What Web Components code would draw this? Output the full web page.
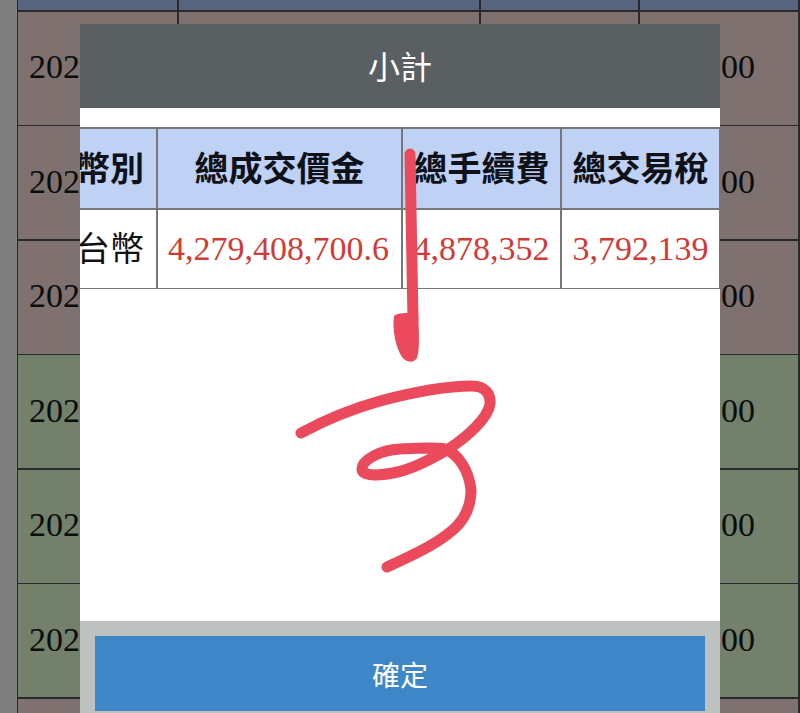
<!DOCTYPE html>
<html lang="zh-Hant">
<head>
<meta charset="utf-8">
<title>小計</title>
<style>
html, body { margin: 0; height: 100%; overflow: hidden; background: #7f7f7f; }
</style>
</head>
<body>
<report-page>
	<bg-table></bg-table>
	<summary-dialog heading="小計" confirm="確定">
		<summary-table></summary-table>
	</summary-dialog>
	<pen-marks></pen-marks>
</report-page>
<script>
'use strict';
((window, document) => {
	class ReportPage extends HTMLElement {
		constructor() {
			super();
			let shadowRoot = this.attachShadow({mode: 'open'});
			shadowRoot.innerHTML = `
			<style>
				:host {
					display: block;
					position: relative;
					width: 800px;
					height: 713px;
					overflow: hidden;
					background: #7f7f7f;
				}
			</style>
			<slot></slot>
			`;
		}
	}

	class BgTable extends HTMLElement {
		constructor() {
			super();
			let shadowRoot = this.attachShadow({mode: 'open'});
			let tones = ['brown', 'brown', 'brown', 'green', 'green', 'green', 'brown'];
			let rows = tones.map((tone, i) => `
				<div class="cell ${tone} first">${i < 6 ? '202' : ''}</div>
				<div class="cell ${tone}"></div>
				<div class="cell ${tone}"></div>
				<div class="cell ${tone} last">${i < 6 ? '00' : ''}</div>
			`).join('');
			shadowRoot.innerHTML = `
			<style>
				:host {
					display: block;
					padding-left: 17px;
					height: 713px;
				}
				.grid {
					display: grid;
					grid-template-columns: 159px 300px 157px 158px;
					grid-template-rows: 10px repeat(6, 113px) 30px;
					gap: 1.5px 2px;
					height: 713px;
					padding-left: 1px;
					background: #2a2a2a;
					font: 34px "Liberation Serif", serif;
					color: #0b0d0a;
				}
				.head { background: #596580; }
				.cell { display: flex; align-items: center; padding-bottom: 2px; box-sizing: border-box; }
				.brown { background: #7e7170; }
				.green { background: #72806c; }
				.first { padding-left: 11px; }
				.last { justify-content: flex-end; padding-right: 43px; }
			</style>
			<div class="grid">
				<div class="head"></div><div class="head"></div><div class="head"></div><div class="head"></div>
				${rows}
			</div>
			`;
		}
	}

	class SummaryDialog extends HTMLElement {
		constructor() {
			super();
			let shadowRoot = this.attachShadow({mode: 'open'});
			shadowRoot.innerHTML = `
			<style>
				:host {
					position: absolute;
					left: 80px;
					top: 24px;
					width: 640px;
					height: 689px;
					display: flex;
					flex-direction: column;
					background: #fff;
					font-family: "Noto Sans CJK TC", "Noto Sans", sans-serif;
				}
				header {
					flex: none;
					height: 84px;
					padding-bottom: 2px;
					box-sizing: border-box;
					display: flex;
					align-items: center;
					justify-content: center;
					background: #5a6061;
					color: #fff;
					font-size: 32px;
				}
				main {
					flex: 1;
					min-height: 0;
					padding-top: 19px;
					overflow: hidden;
				}
				footer {
					flex: none;
					height: 92px;
					padding: 15px 15px 2px;
					box-sizing: border-box;
					background: #bfc1c1;
				}
				button {
					display: block;
					width: 100%;
					height: 75px;
					border: 0;
					padding: 0;
					background: #3d87c9;
					color: #fff;
					font: 28px "Noto Sans CJK TC", sans-serif;
				}
			</style>
			<header></header>
			<main><slot></slot></main>
			<footer><button type="button"></button></footer>
			`;
			shadowRoot.querySelector('header').textContent = this.getAttribute('heading');
			shadowRoot.querySelector('button').textContent = this.getAttribute('confirm');
		}
	}

	class SummaryTable extends HTMLElement {
		constructor() {
			super();
			let shadowRoot = this.attachShadow({mode: 'open'});
			shadowRoot.innerHTML = `
			<style>
				:host {
					display: grid;
					grid-template-columns: 76px 243px 157px 157px;
					grid-template-rows: 79px 78px;
					gap: 2px;
					width: 640px;
					padding: 1.5px 0;
					background: #777;
					font-family: "Noto Sans CJK TC", sans-serif;
				}
				div {
					display: flex;
					align-items: center;
					justify-content: center;
					white-space: nowrap;
					overflow: hidden;
				}
				.th {
					background: #c0d1f6;
					color: #0e1118;
					font-size: 34px;
					font-weight: 700;
					padding-bottom: 4px;
				}
				.td {
					background: #fff;
					color: #111;
					font-size: 34px;
					padding-bottom: 5px;
				}
				.num {
					color: #d33a36;
					font: 34px "Liberation Serif", serif;
					padding-bottom: 0;
				}
				.wide { padding-right: 2px; }
				.lead { justify-content: flex-end; padding-right: 12px; }
			</style>
			<div class="th lead">幣別</div>
			<div class="th">總成交價金</div>
			<div class="th">總手續費</div>
			<div class="th">總交易稅</div>
			<div class="td lead">台幣</div>
			<div class="td num wide">4,279,408,700.6</div>
			<div class="td num">4,878,352</div>
			<div class="td num">3,792,139</div>
			`;
		}
	}

	// hand drawn annotation lying over the dialog
	class PenMarks extends HTMLElement {
		constructor() {
			super();
			let shadowRoot = this.attachShadow({mode: 'open'});
			shadowRoot.innerHTML = `
			<style>
				:host {
					position: absolute;
					left: 0;
					top: 0;
					width: 800px;
					height: 713px;
					pointer-events: none;
				}
				svg { display: block; }
			</style>
			<svg width="800" height="713" viewBox="0 0 800 713" fill="none" stroke="#ea4a5c" stroke-linecap="round" stroke-linejoin="round">
				<path stroke-width="11" d="M410 154C411 200 412 260 413 320"/>
				<path fill="#ea4a5c" stroke="none" d="M394 316C397 313 404 313 410 313L418 312C419 330 420 350 417 358C414 363 406 363 402 357C396 348 392 330 394 316Z"/>
				<path stroke-width="11" d="M301 433C325 420 355 408 380 401C410 393 445 386 472 386C485 386 491 394 490 404C488 418 468 436 450 448C432 459 410 470 393 473C378 476 362 476 362 469C362 460 380 450 400 449C420 448 436 447 445 449C458 454 469 470 471 490C471 505 466 516 458 525C444 540 420 552 387 567"/>
			</svg>
			`;
		}
	}

	window.customElements.define('report-page', ReportPage);
	window.customElements.define('bg-table', BgTable);
	window.customElements.define('summary-dialog', SummaryDialog);
	window.customElements.define('summary-table', SummaryTable);
	window.customElements.define('pen-marks', PenMarks);
})(this, document);
</script>
</body>
</html>
